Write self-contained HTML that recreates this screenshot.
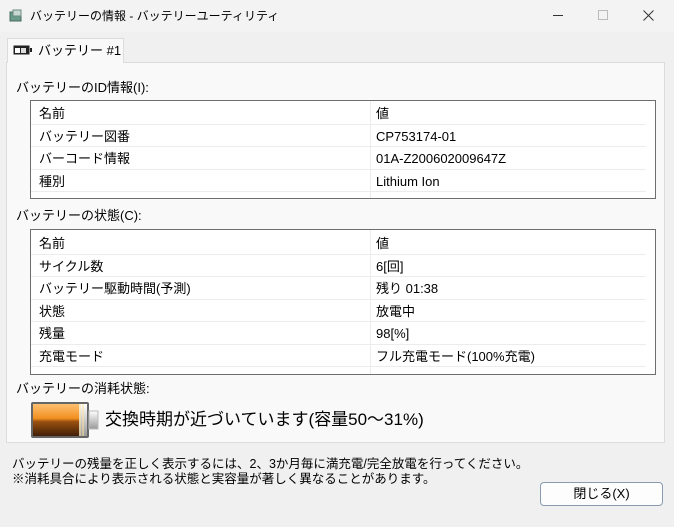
<!DOCTYPE html>
<html><head><meta charset="utf-8"><style>
*{margin:0;padding:0;box-sizing:border-box}
body{width:674px;height:527px;background:#f0f0f0;font-family:"Liberation Sans","Noto Sans CJK JP",sans-serif;font-size:13px;color:#000;position:relative;overflow:hidden}
.a{position:absolute;white-space:nowrap;line-height:16px}
.title{left:0;top:0;width:674px;height:32px;background:#f3f3f3}
.tab{left:7px;top:38px;width:117px;height:25px;background:#f9f9f9;border:1px solid #dcdcdc;border-bottom:none;z-index:2}
.panel{left:6px;top:62px;width:659px;height:381px;background:#f9f9f9;border:1px solid #dcdcdc}
.tbl{background:#fff;border:1px solid #6e6e6e}
.row{position:absolute;left:0;width:615px;height:22.5px;border-bottom:1px solid #ececec}
.row span{position:absolute;top:4px;font-size:13px;line-height:15px;height:15px;display:block}
.row .c1{left:8px}.row .c2{left:345px}
.vl{position:absolute;top:0;bottom:0;left:339px;width:1px;background:#ececec}
.btn{left:540px;top:482px;width:123px;height:24px;background:#fdfdfd;border:1px solid #8a9bb0;border-radius:4px;text-align:center;line-height:22px}
</style></head><body>
<div class="a title"></div>
<svg class="a" style="left:8px;top:8px" width="16" height="16"><rect x="2" y="4" width="11" height="9" fill="#6a9a8a" stroke="#4a6a60"/><rect x="5" y="2" width="8" height="6" fill="#c8d8d0" stroke="#6a8a80"/></svg>
<div class="a" style="left:30px;top:8px;font-size:12px">バッテリーの情報 - バッテリーユーティリティ</div>
<div class="a" style="left:553px;top:15px;width:10px;height:1px;background:#333"></div>
<div class="a" style="left:598px;top:10px;width:10px;height:10px;border:1px solid #bbb"></div>
<svg class="a" style="left:643px;top:10px" width="11" height="11"><path d="M0.5 0.5L10.5 10.5M10.5 0.5L0.5 10.5" stroke="#333" stroke-width="1"/></svg>
<div class="a panel"></div>
<div class="a tab"></div>
<svg class="a" style="left:13px;top:44px;z-index:3" width="20" height="12"><rect x="0.5" y="1.5" width="16" height="9" fill="#222"/><rect x="2" y="4" width="5" height="5" fill="#fff"/><rect x="8" y="4" width="5" height="5" fill="#ddd"/><rect x="17" y="4" width="2" height="4" fill="#222"/></svg>
<div class="a" style="left:38px;top:43px;font-size:13px;z-index:3">バッテリー #1</div>
<div class="a" style="left:16px;top:80px;font-size:13px">バッテリーのID情報(I):</div>
<div class="a tbl" style="left:30px;top:100px;width:626px;height:99px">
<div class="vl"></div>
<div class="row" style="top:1px"><span class="c1">名前</span><span class="c2">値</span></div>
<div class="row" style="top:23.5px"><span class="c1">バッテリー図番</span><span class="c2">CP753174-01</span></div>
<div class="row" style="top:46px"><span class="c1">バーコード情報</span><span class="c2">01A-Z200602009647Z</span></div>
<div class="row" style="top:68.5px"><span class="c1">種別</span><span class="c2">Lithium Ion</span></div>
</div>
<div class="a" style="left:16px;top:208px;font-size:13px">バッテリーの状態(C):</div>
<div class="a tbl" style="left:30px;top:229px;width:626px;height:146px">
<div class="vl"></div>
<div class="row" style="top:2px"><span class="c1">名前</span><span class="c2">値</span></div>
<div class="row" style="top:24.5px"><span class="c1">サイクル数</span><span class="c2">6[回]</span></div>
<div class="row" style="top:47px"><span class="c1">バッテリー駆動時間(予測)</span><span class="c2">残り 01:38</span></div>
<div class="row" style="top:69.5px"><span class="c1">状態</span><span class="c2">放電中</span></div>
<div class="row" style="top:92px"><span class="c1">残量</span><span class="c2">98[%]</span></div>
<div class="row" style="top:114.5px"><span class="c1">充電モード</span><span class="c2">フル充電モード(100%充電)</span></div>
</div>
<div class="a" style="left:16px;top:381px;font-size:13px">バッテリーの消耗状態:</div>
<svg class="a" style="left:30px;top:401px" width="70" height="38">
<defs><linearGradient id="g" x1="0" y1="0" x2="0" y2="1"><stop offset="0" stop-color="#ffc070"/><stop offset="0.45" stop-color="#f09020"/><stop offset="0.55" stop-color="#9a5010"/><stop offset="1" stop-color="#402008"/></linearGradient>
<linearGradient id="h" x1="0" y1="0" x2="0" y2="1"><stop offset="0" stop-color="#fff"/><stop offset="1" stop-color="#999"/></linearGradient></defs>
<rect x="1" y="1" width="58" height="36" rx="2" fill="#666"/>
<rect x="3" y="3" width="54" height="32" fill="url(#h)"/>
<rect x="3" y="3" width="46" height="32" fill="url(#g)"/>
<line x1="50" y1="3" x2="50" y2="35" stroke="#ffe0a0"/><line x1="53" y1="3" x2="53" y2="35" stroke="#ffe0a0"/>
<rect x="59" y="10" width="9" height="18" fill="url(#h)" stroke="#bbb"/>
</svg>
<div class="a" style="left:105px;top:410px;font-size:17px;line-height:20px">交換時期が近づいています(容量50～31%)</div>
<div class="a" style="left:12px;top:456px;font-size:12.5px">バッテリーの残量を正しく表示するには、2、3か月毎に満充電/完全放電を行ってください。</div>
<div class="a" style="left:12px;top:471px;font-size:12.5px">※消耗具合により表示される状態と実容量が著しく異なることがあります。</div>
<div class="a btn">閉じる(X)</div>
</body></html>
